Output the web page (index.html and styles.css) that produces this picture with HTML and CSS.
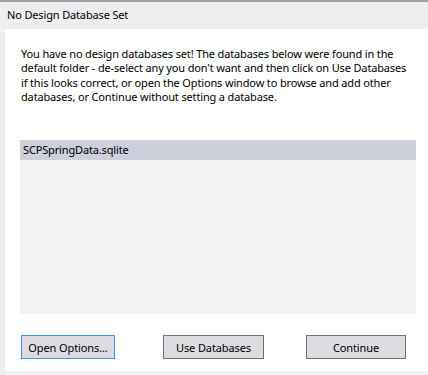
FILE: index.html
```html
<!DOCTYPE html>
<html>
<head>
<meta charset="utf-8">
<title>No Design Database Set</title>
<link rel="stylesheet" href="styles.css">
</head>
<body>
<div class="window">
  <div class="titlebar">No Design Database Set</div>
  <div class="panel">
    <p class="message">You have no design databases set! The databases below were found in the<br>default folder - de-select any you don't want and then click on Use Databases<br>if this looks correct, or open the Options window to browse and add other<br>databases, or Continue without setting a database.</p>
    <div class="listbox">
      <div class="item selected">SCPSpringData.sqlite</div>
    </div>
    <div class="buttons">
      <button class="btn focused btn-options">Open Options...</button>
      <button class="btn btn-use">Use Databases</button>
      <button class="btn btn-continue">Continue</button>
    </div>
  </div>
</div>
</body>
</html>
```
FILE: styles.css
```css
html, body {
  margin: 0;
  padding: 0;
  background: #f0f0f0;
  width: 428px;
  height: 375px;
  overflow: hidden;
}
.window {
  font-family: "Noto Sans", "Open Sans", sans-serif;
  font-size: 11px;
  letter-spacing: -0.15px;
  color: #000;
  display: flex;
  flex-direction: column;
}
.titlebar {
  height: 27px;
  border-top: 2px solid #a0a0a0;
  background: #eeeef0;
  padding-left: 7px;
  line-height: 26px;
  box-sizing: content-box;
}
.panel {
  margin-left: 5px;
  height: 342px;
  background: #fff;
  display: flex;
  flex-direction: column;
  padding: 18px 0 0 16px;
  box-sizing: border-box;
}
.message {
  margin: 0;
  line-height: 14.3px;
  white-space: nowrap;
  color: #000;
}
.listbox {
  margin-top: 36px;
  margin-left: -1px;
  width: 396px;
  height: 174px;
  background: #f4f4f4;
}
.item {
  height: 20px;
  line-height: 20px;
  padding-left: 3px;
}
.item.selected {
  background: #cdcfdb;
}
.buttons {
  display: flex;
  margin-top: 21px;
}
.btn {
  height: 24px;
  font-family: inherit;
  font-size: 11px;
  letter-spacing: -0.1px;
  color: #000;
  background: #dcdce0;
  border: 1px solid #707070;
  padding: 0;
  margin: 0;
}
.btn.focused {
  border-color: #3c99e6;
}
.btn-options {
  width: 94px;
}
.btn-use {
  width: 101px;
  margin-left: 48px;
}
.btn-continue {
  width: 100px;
  margin-left: 42px;
}
```
